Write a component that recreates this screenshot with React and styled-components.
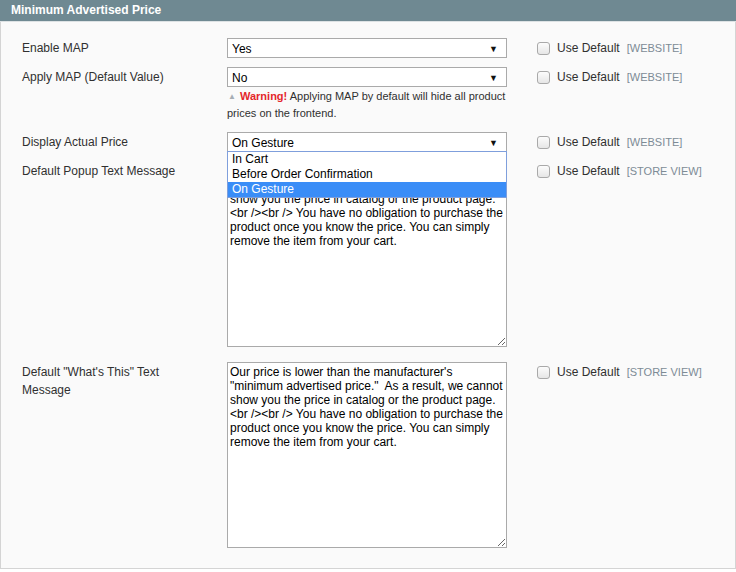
import React from "react";
import styled, { createGlobalStyle } from "styled-components";

const GlobalStyle = createGlobalStyle`
  html, body {
    margin: 0;
    padding: 0;
    background: #ffffff;
    font-family: "Liberation Sans", Arial, sans-serif;
  }
`;

const Section = styled.div`
  width: 736px;
  box-sizing: border-box;
`;

const Header = styled.div`
  height: 22px;
  box-sizing: border-box;
  background: #6f8992;
  border-bottom: 1px solid #dde2e4;
  color: #ffffff;
  font-weight: bold;
  font-size: 12px;
  line-height: 21px;
  padding-left: 11px;
`;

const Panel = styled.div`
  background: #fafafa;
  border: 1px solid #d4d4d4;
  border-top: none;
  height: 547px;
  box-sizing: border-box;
  padding: 16px 0 0 20px;
  display: flex;
  flex-direction: column;
  gap: 9px;
`;

const Row = styled.div`
  display: grid;
  grid-template-columns: 206px 280px auto;
  align-items: start;
  margin-bottom: ${(p) => p.$extra || 0}px;
`;

const Label = styled.div`
  font-size: 12px;
  line-height: 18px;
  padding: 1px 0 0 1px;
  color: #303030;
  width: 180px;
`;

const Control = styled.div`
  position: relative;
`;

const SelectBox = styled.div`
  height: 20px;
  box-sizing: border-box;
  background: #ffffff;
  border: 1px solid #aaaaaa;
  font-size: 12px;
  line-height: 18px;
  color: #000;
  padding: 1px 8px 0 4px;
  display: flex;
  justify-content: space-between;
  align-items: center;
`;

const Arrow = styled.span`
  font-size: 9px;
  color: #111;
`;

const Dropdown = styled.div`
  position: absolute;
  left: 0;
  right: 0;
  top: 19px;
  background: #ffffff;
  border: 1px solid #7f9fdc;
  z-index: 5;
`;

const Option = styled.div`
  font-size: 12px;
  line-height: 15px;
  padding: 0 0 0 4px;
  color: ${(p) => (p.$selected ? "#ffffff" : "#000")};
  background: ${(p) => (p.$selected ? "#3a8df7" : "transparent")};
`;

const Note = styled.div`
  font-size: 11px;
  line-height: 17px;
  color: #303030;
  padding: 1px 0 1px;
`;

const NoteIcon = styled.span`
  display: inline-block;
  width: 13px;
  padding-left: 1px;
  box-sizing: border-box;
  color: #a6aeb5;
  font-size: 8px;
  vertical-align: 1px;
`;

const Warn = styled.span`
  color: #e4262b;
  font-weight: bold;
`;

const TextArea = styled.textarea`
  display: block;
  width: 280px;
  height: 186px;
  box-sizing: border-box;
  margin: 0;
  border: 1px solid #aaaaaa;
  padding: 2px 2px;
  font-family: "Liberation Sans", Arial, sans-serif;
  font-size: 12px;
  line-height: 14px;
  color: #000;
  background: #ffffff;
  outline: none;
  overflow: hidden;
`;

const Scope = styled.label`
  display: flex;
  align-items: center;
  height: 18px;
  padding: 1px 0 0 30px;
  font-size: 12px;
  color: #303030;
`;

const Check = styled.span`
  width: 13px;
  height: 13px;
  box-sizing: border-box;
  border: 1px solid #a9a9a9;
  border-radius: 3px;
  background: linear-gradient(#fcfcfc, #e6e6e6);
  margin-right: 7px;
`;

const ScopeTag = styled.span`
  margin-left: 7px;
  font-size: 11px;
  color: #7d8b96;
`;

const message =
  'Our price is lower than the manufacturer\'s "minimum advertised price."  As a result, we cannot show you the price in catalog or the product page. <br /><br /> You have no obligation to purchase the product once you know the price. You can simply remove the item from your cart.';

function UseDefault({ scope }) {
  return (
    <Scope>
      <Check />
      Use Default
      <ScopeTag>[{scope}]</ScopeTag>
    </Scope>
  );
}

export default function App() {
  return (
    <>
      <GlobalStyle />
      <Section>
        <Header>Minimum Advertised Price</Header>
        <Panel>
          <Row>
            <Label>Enable MAP</Label>
            <Control>
              <SelectBox>
                Yes<Arrow>▼</Arrow>
              </SelectBox>
            </Control>
            <UseDefault scope="WEBSITE" />
          </Row>
          <Row>
            <Label>Apply MAP (Default Value)</Label>
            <Control>
              <SelectBox>
                No<Arrow>▼</Arrow>
              </SelectBox>
              <Note>
                <NoteIcon>▲</NoteIcon>
                <Warn>Warning!</Warn> Applying MAP by default will hide all
                product prices on the frontend.
              </Note>
            </Control>
            <UseDefault scope="WEBSITE" />
          </Row>
          <Row>
            <Label>Display Actual Price</Label>
            <Control>
              <SelectBox>
                On Gesture<Arrow>▼</Arrow>
              </SelectBox>
              <Dropdown>
                <Option>In Cart</Option>
                <Option>Before Order Confirmation</Option>
                <Option $selected>On Gesture</Option>
              </Dropdown>
            </Control>
            <UseDefault scope="WEBSITE" />
          </Row>
          <Row $extra={6}>
            <Label>Default Popup Text Message</Label>
            <Control>
              <TextArea defaultValue={message} />
            </Control>
            <UseDefault scope="STORE VIEW" />
          </Row>
          <Row>
            <Label>Default "What's This" Text Message</Label>
            <Control>
              <TextArea defaultValue={message} />
            </Control>
            <UseDefault scope="STORE VIEW" />
          </Row>
        </Panel>
      </Section>
    </>
  );
}
